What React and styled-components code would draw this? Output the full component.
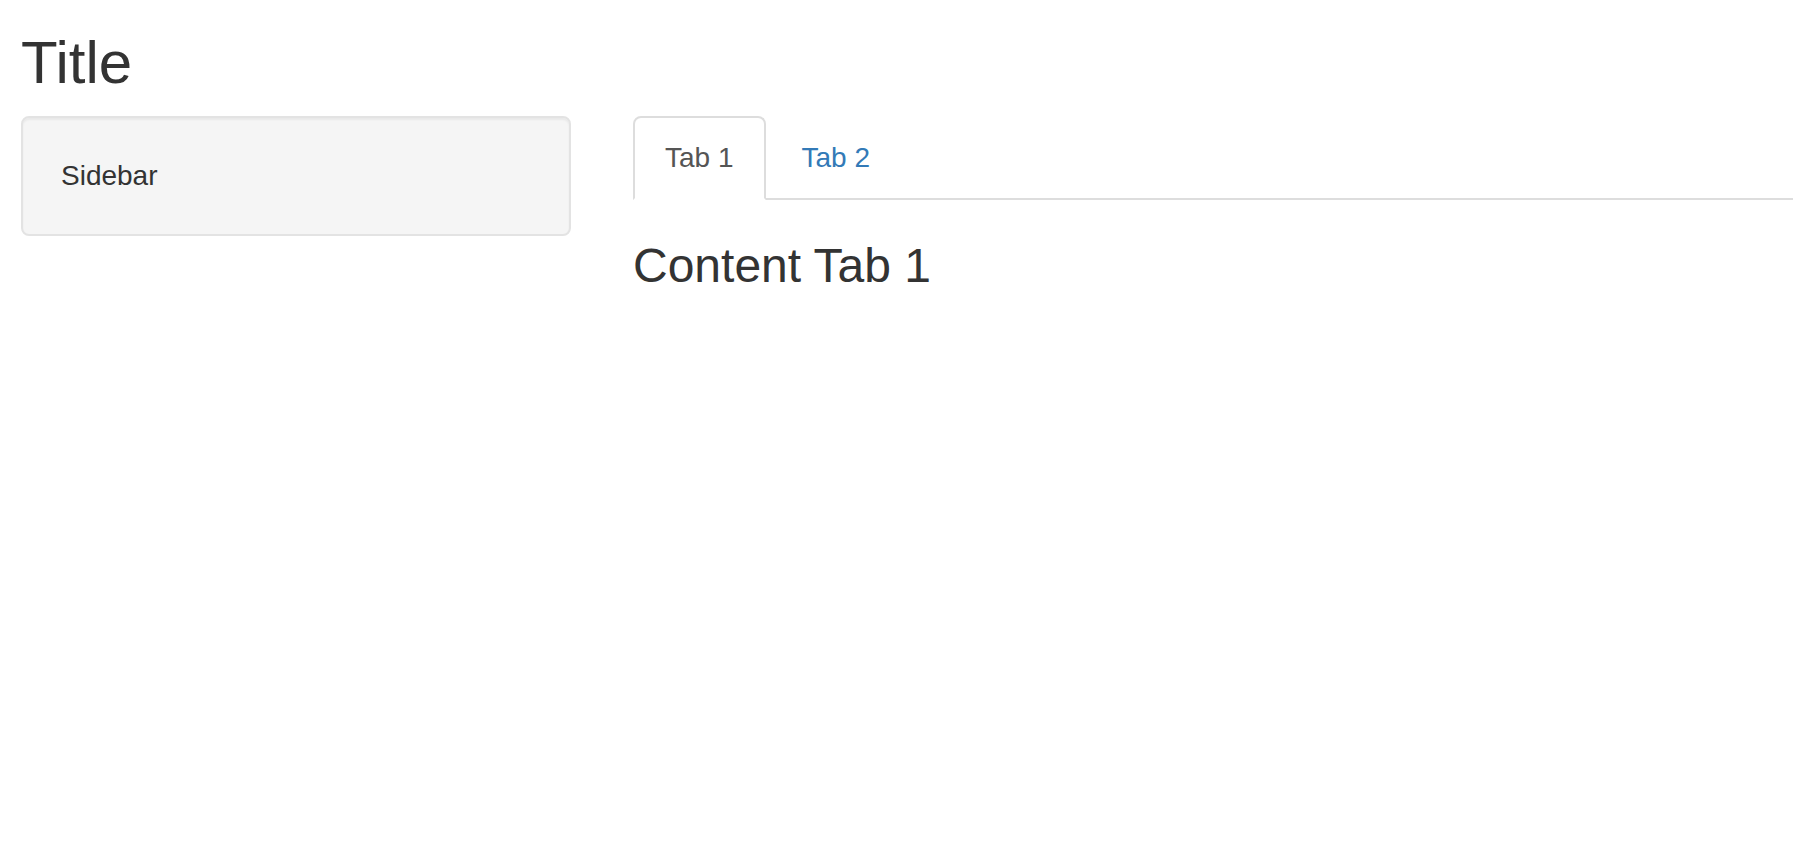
import * as React from "react"
import styled, { createGlobalStyle } from "styled-components"

const GlobalStyle = createGlobalStyle`
    html, body {
        margin: 0;
        padding: 0;
        background: #ffffff;
    }
    body {
        font-family: "Liberation Sans", Arial, Helvetica, sans-serif;
        font-size: 28px;
        line-height: 40px;
        color: #333333;
    }
    * {
        box-sizing: border-box;
    }
`;

const PageContainer = styled.div`
    padding: 0 17px 0 21px;
`;

const PageTitle = styled.h2`
    font-size: 60px;
    font-weight: 500;
    line-height: 1.1;
    margin: 30px 0 20px 0;
    color: #333333;
`;

const LayoutRow = styled.div`
    display: grid;
    grid-template-columns: 550px 1fr;
    column-gap: 62px;
    align-items: start;
`;

const SidebarWell = styled.div`
    background: #f5f5f5;
    border: 2px solid #e3e3e3;
    border-radius: 8px;
    padding: 38px;
    box-shadow: inset 0 2px 2px rgba(0, 0, 0, 0.05);
    min-height: 40px;
`;

const MainColumn = styled.div`
    display: flex;
    flex-direction: column;
`;

const TabList = styled.ul`
    display: flex;
    list-style: none;
    margin: 0;
    padding: 0;
    border-bottom: 2px solid #dddddd;
`;

const TabItem = styled.li`
    margin-bottom: -2px;
    margin-right: 4px;
`;

const TabLink = styled.a`
    display: block;
    padding: 20px 30px;
    line-height: 40px;
    border: 2px solid ${props => props.$active ? "#dddddd" : "transparent"};
    border-bottom-color: ${props => props.$active ? "#ffffff" : "transparent"};
    border-radius: 8px 8px 0 0;
    background: ${props => props.$active ? "#ffffff" : "transparent"};
    color: ${props => props.$active ? "#555555" : "#337ab7"};
    text-decoration: none;
    cursor: ${props => props.$active ? "default" : "pointer"};
`;

const ContentTitle = styled.h3`
    font-size: 48px;
    font-weight: 500;
    line-height: 1.1;
    margin: 40px 0 20px 0;
    color: #333333;
`;

const tabs = [
    { id: 1, label: "Tab 1", content: "Content Tab 1" },
    { id: 2, label: "Tab 2", content: "Content Tab 2" },
];

const App = () => {
    const [active, setActive] = React.useState(1)
    const current = tabs.find(t => t.id === active)

    return(
        <PageContainer>
            <GlobalStyle/>
            <PageTitle>Title</PageTitle>
            <LayoutRow>
                <SidebarWell>Sidebar</SidebarWell>
                <MainColumn>
                    <TabList>
                        {tabs.map(t => (
                            <TabItem key={t.id}>
                                <TabLink $active={t.id === active} onClick={() => setActive(t.id)}>
                                    {t.label}
                                </TabLink>
                            </TabItem>
                        ))}
                    </TabList>
                    <ContentTitle>{current.content}</ContentTitle>
                </MainColumn>
            </LayoutRow>
        </PageContainer>
    )
}

export default App;
